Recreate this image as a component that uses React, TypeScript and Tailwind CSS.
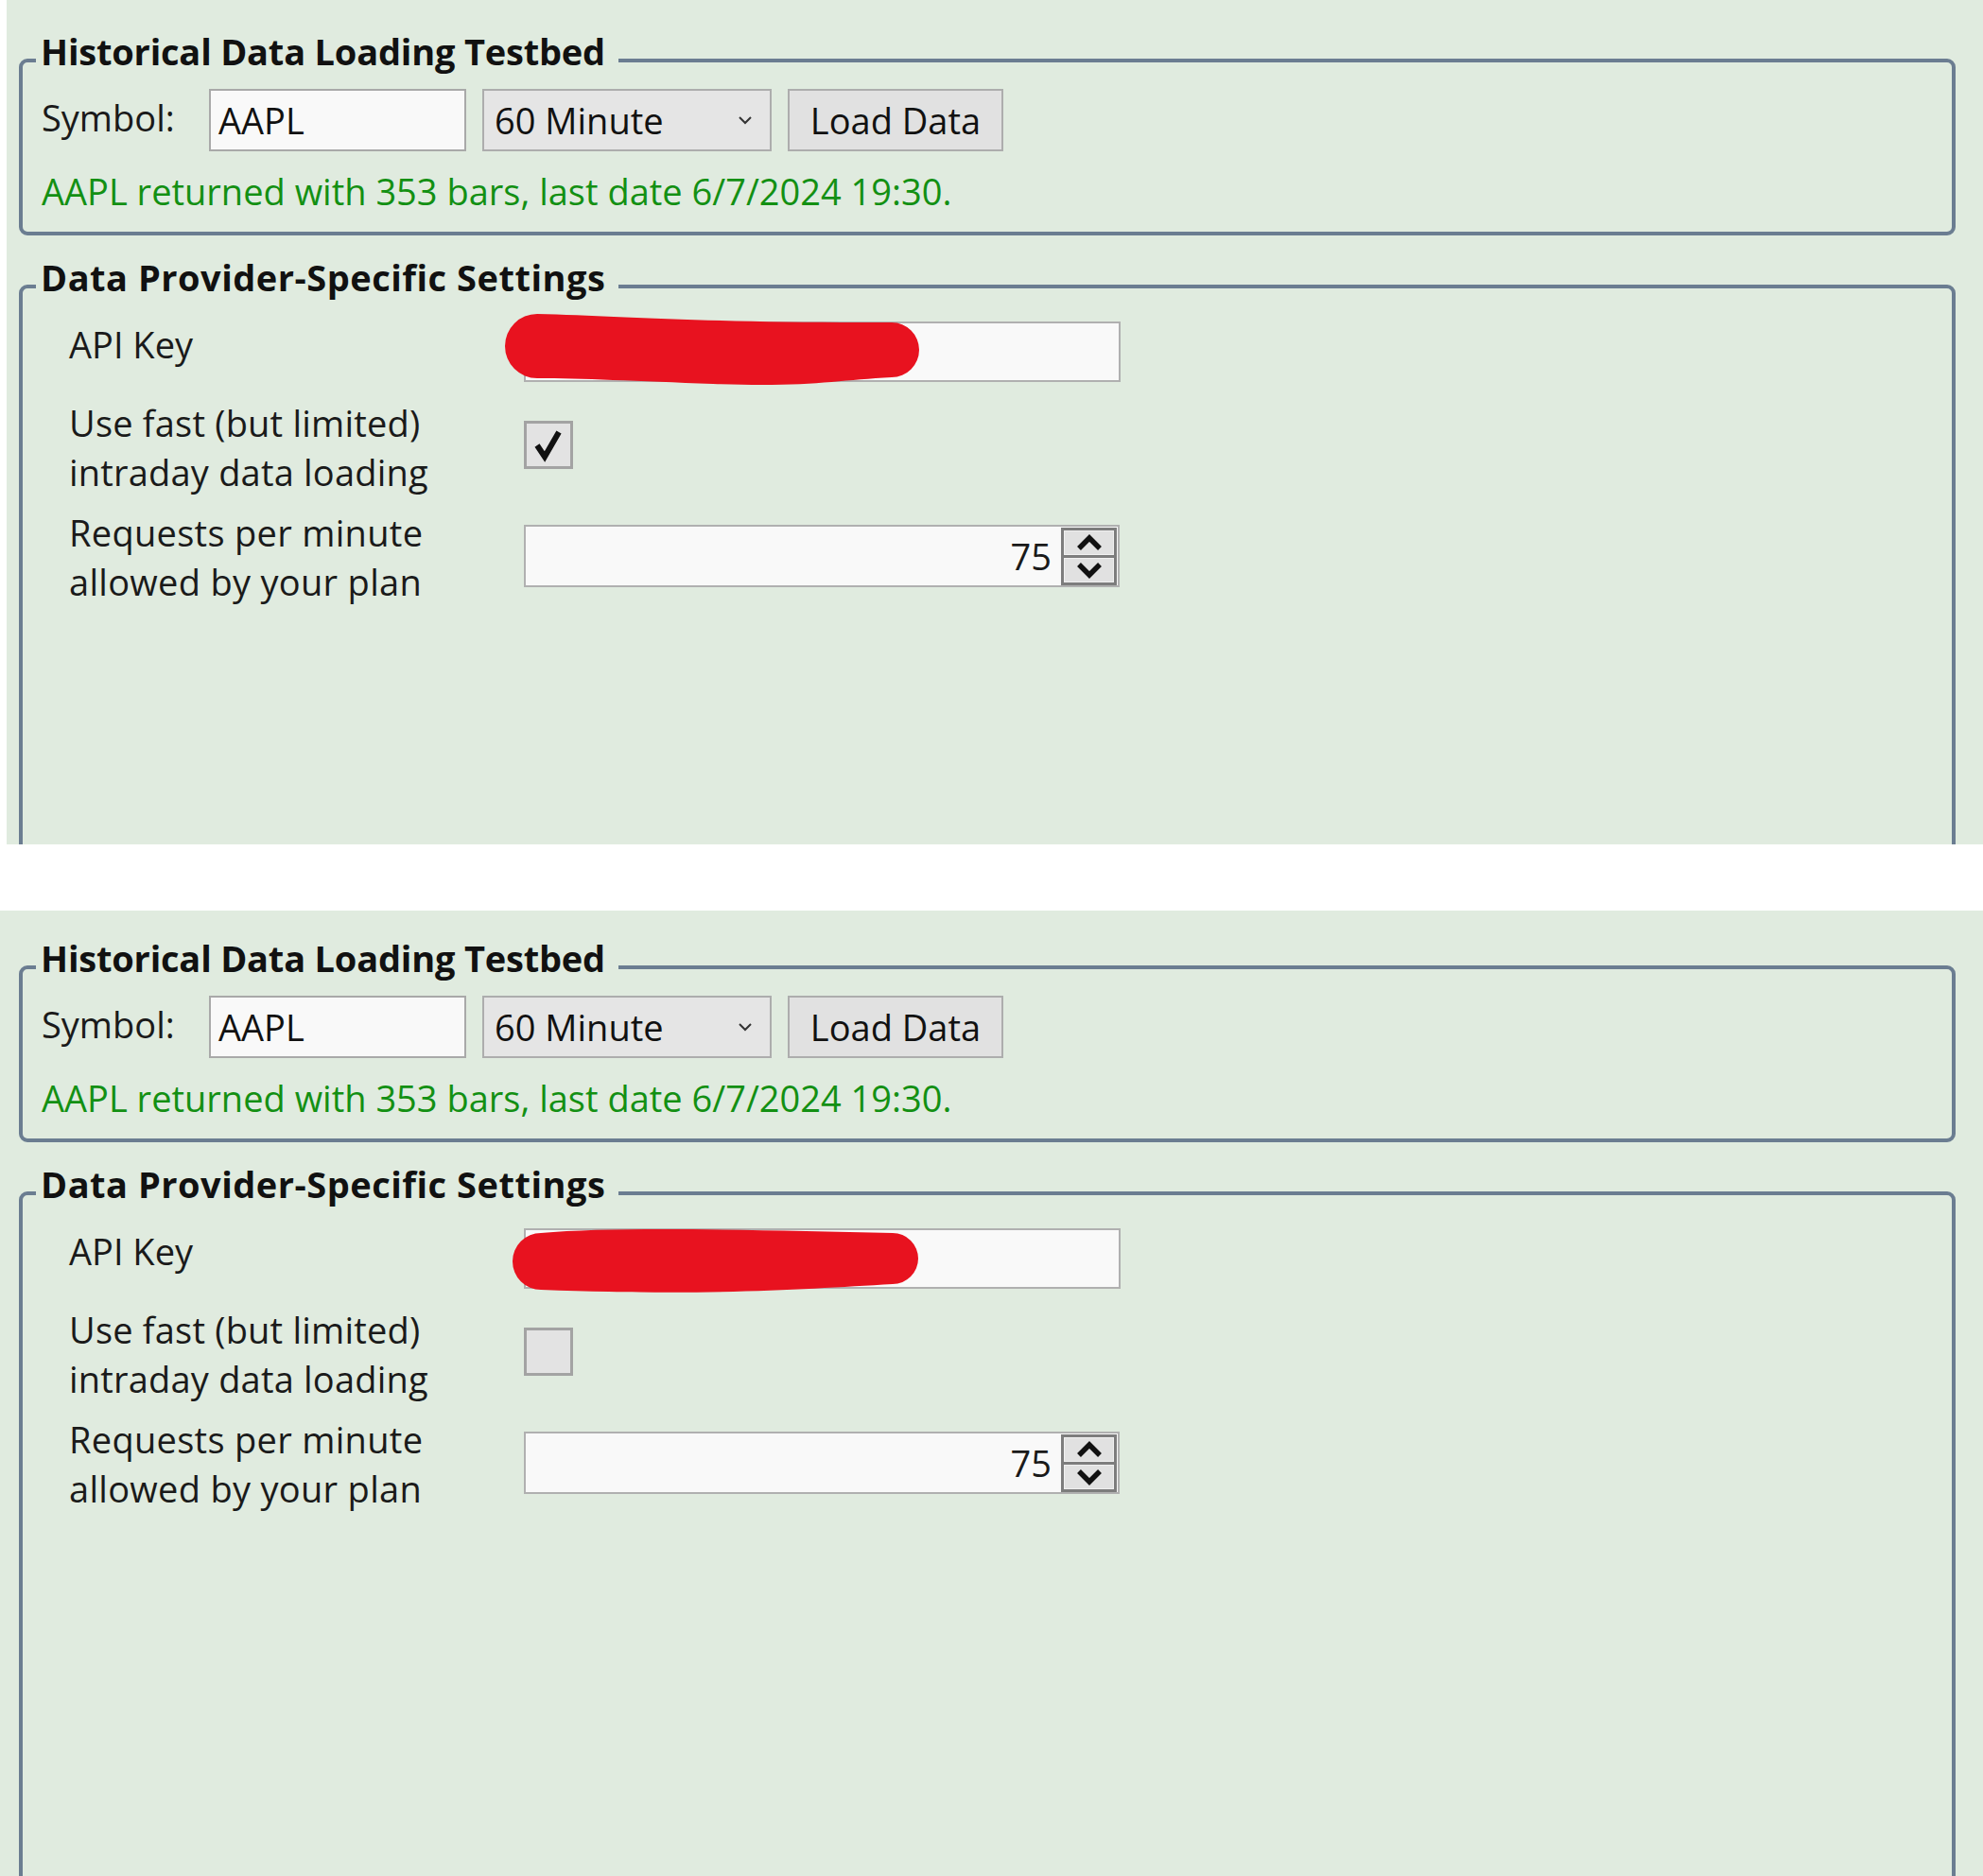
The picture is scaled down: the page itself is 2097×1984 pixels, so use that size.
import React from "react";

const FONT = "font-['Open_Sans',_'Noto_Sans',_sans-serif]";

const BLOB_TOP =
  "M 14 -8 C 100 -6, 200 2, 389 1 A 29 29 0 0 1 389 59 C 330 62, 300 70, 200 66 C 120 63, 60 60, 14 60 A 34 34 0 0 1 14 -8 Z";
const BLOB_BOTTOM =
  "M 18 5 C 100 -2, 250 2, 390 5 A 27 27 0 0 1 390 59 C 300 64, 200 72, 18 65 A 30 30 0 0 1 18 5 Z";

function Chevron() {
  return (
    <svg width="16" height="10" viewBox="0 0 16 10" className="text-[#333]">
      <polyline points="2,2 8,8 14,2" fill="none" stroke="currentColor" strokeWidth="2" />
    </svg>
  );
}

function SpinArrow({ up }: { up?: boolean }) {
  return (
    <svg width="30" height="18" viewBox="0 0 30 18">
      <polyline
        points={up ? "4,15 15,4 26,15" : "4,3 15,14 26,3"}
        fill="none"
        stroke="#111"
        strokeWidth="5.5"
      />
    </svg>
  );
}

function Panel({ className, checked, blob }: { className: string; checked?: boolean; blob: string }) {
  return (
    <div className={`overflow-hidden bg-[#e0ebdf] pr-[29px] ${className}`}>
      {/* group 1 */}
      <fieldset className="rounded-[9px] border-[4px] border-[#6b7d91] pb-[17px]">
        <legend className="ml-[14px] pl-[5px] pr-[14px] pb-[20px] text-[38px] leading-[32px] font-bold tracking-[-0.2px] text-[#111]">
          Historical Data Loading Testbed
        </legend>
        <div className="pl-[20px] pt-[4px]">
          <div className="flex h-[66px] items-center">
            <span className="-mt-[6px] w-[177px] text-[#1a1a1a]">Symbol:</span>
            <div className="flex h-[66px] w-[272px] items-center border-[2px] border-[#a9a9a9] bg-[#f9f9f9] pl-[8px]">
              AAPL
            </div>
            <div className="ml-[17px] flex h-[66px] w-[306px] items-center justify-between border-[2px] border-[#adadad] bg-[#e5e5e5] pl-[11px] pr-[18px]">
              <span>60 Minute</span>
              <Chevron />
            </div>
            <button className="ml-[17px] h-[66px] w-[228px] border-[2px] border-[#adadad] bg-[#e1e1e1]">
              Load Data
            </button>
          </div>
          <p className="mt-[16px] leading-[52px] text-[#139013]">
            AAPL returned with 353 bars, last date 6/7/2024 19:30.
          </p>
        </div>
      </fieldset>

      {/* group 2 */}
      <fieldset className="mt-[28px] h-[1300px] rounded-[9px] border-[4px] border-[#6b7d91]">
        <legend className="ml-[14px] pl-[5px] pr-[14px] pb-[20px] text-[38px] leading-[32px] font-bold tracking-[0.5px] text-[#111]">
          Data Provider-Specific Settings
        </legend>
        <div className="pl-[49px] pt-[9px] text-[#1a1a1a]">
          <div className="flex items-start">
            <span className="w-[481px] leading-[52px]">API Key</span>
            <div className="relative mt-[2px] h-[64px] w-[631px] border-[2px] border-[#b0b0b0] bg-[#f9f9f9]">
              <svg
                className="absolute left-[-32px] top-[-17px] overflow-visible"
                width="470"
                height="100"
                viewBox="0 0 470 100"
              >
                <g transform="translate(30 15)">
                  <path d={blob} fill="#e8121f" />
                </g>
              </svg>
            </div>
          </div>

          <div className="mt-[17px] flex items-start">
            <span className="w-[481px] leading-[52px] tracking-[0.2px]">
              Use fast (but limited)
              <br />
              intraday data loading
            </span>
            <div className="mt-[24px] flex h-[51px] w-[52px] items-center justify-center border-[3px] border-[#a3a3a3] bg-[#e3e3e3]">
              {checked && (
                <svg width="40" height="40" viewBox="0 0 40 40">
                  <path d="M 8 20 L 16 32 L 31 6" fill="none" stroke="#111" strokeWidth="6" />
                </svg>
              )}
            </div>
          </div>

          <div className="mt-[12px] flex items-start">
            <span className="w-[481px] leading-[52px] tracking-[0.3px]">
              Requests per minute
              <br />
              allowed by your plan
            </span>
            <div className="mt-[18px] flex h-[66px] w-[630px] items-center border-[2px] border-[#b0b0b0] bg-[#f9f9f9] pr-[1px]">
              <span className="flex-1 pr-[10px] text-right">75</span>
              <div className="flex h-[61px] w-[59px] flex-col gap-[3px] border-[3px] border-[#7d7d7d] bg-[#7d7d7d]">
                <div className="flex flex-1 items-center justify-center border border-[#f0f0f0] bg-[#e1e1e1]">
                  <SpinArrow up />
                </div>
                <div className="flex flex-1 items-center justify-center border border-[#f0f0f0] bg-[#e1e1e1]">
                  <SpinArrow />
                </div>
              </div>
            </div>
          </div>
        </div>
      </fieldset>
    </div>
  );
}

export default function App() {
  return (
    <div className={`h-[1984px] w-[2097px] overflow-hidden bg-white text-[38px] text-[#111] ${FONT}`}>
      <Panel className="ml-[7px] h-[893px] pl-[13px] pt-[38px]" checked blob={BLOB_TOP} />
      <Panel className="mt-[70px] h-[1021px] pl-[20px] pt-[34px]" blob={BLOB_BOTTOM} />
    </div>
  );
}
